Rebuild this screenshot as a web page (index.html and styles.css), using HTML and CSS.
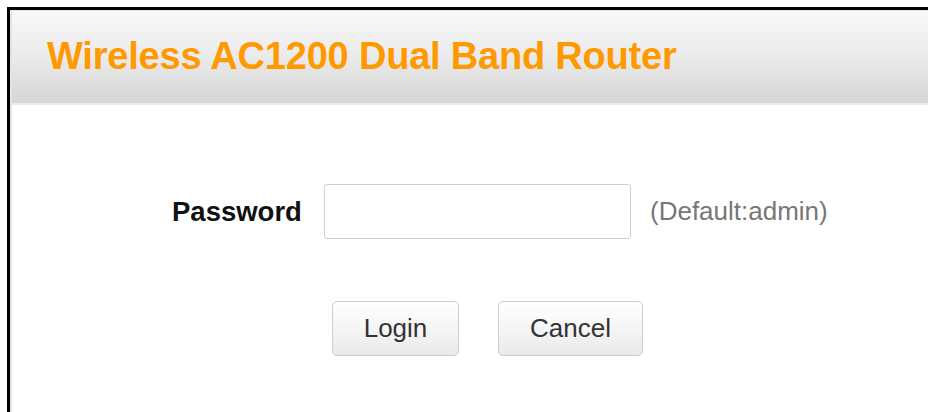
FILE: index.html
```html
<!DOCTYPE html>
<html lang="en">
<head>
<meta charset="utf-8">
<title>Wireless AC1200 Dual Band Router</title>
<link rel="stylesheet" href="styles.css">
</head>
<body>
<div class="frame">
  <div class="panel">
    <header class="banner">
      <h1 class="title">Wireless AC1200 Dual Band Router</h1>
    </header>
    <form class="login" onsubmit="return false">
      <div class="field-row">
        <label class="label" for="pwd">Password</label>
        <input class="input" id="pwd" type="password">
        <span class="hint">(Default:admin)</span>
      </div>
      <div class="button-row">
        <button class="btn btn-login" type="submit">Login</button>
        <button class="btn btn-cancel" type="reset">Cancel</button>
      </div>
    </form>
  </div>
</div>
</body>
</html>
```

FILE: styles.css
```css
html, body {
  margin: 0;
  padding: 0;
  background: #ffffff;
  overflow: hidden;
  height: 412px;
}

body {
  padding: 7px 0 0 7px;
  box-sizing: border-box;
}

.frame {
  width: 960px;
  height: 405px;
  border-top: 3px solid #000;
  border-left: 3px solid #000;
  background: #fff;
  box-sizing: border-box;
}

.panel {
  height: 100%;
  border-left: 2px solid #e4e4e4;
  border-top: 1px solid #e6e6e6;
  box-sizing: border-box;
}

.banner {
  height: 92px;
  background: linear-gradient(to bottom, #f8f8f8 0%, #ececec 45%, #d6d6d6 100%);
  border-bottom: 2px solid #ececec;
  display: flex;
  align-items: center;
  padding-left: 35px;
}

.title {
  margin: 0 0 2px 0;
  font-family: "Liberation Sans", Arial, sans-serif;
  font-weight: bold;
  font-size: 38px;
  color: #ff9900;
  letter-spacing: -0.2px;
}

.login {
  padding-top: 79px;
}

.field-row {
  display: flex;
  align-items: center;
  padding-left: 160px;
}

.label {
  width: 152px;
  font-family: "Liberation Sans", Arial, sans-serif;
  font-weight: bold;
  font-size: 27.5px;
  color: #111;
}

.input {
  width: 307px;
  height: 55px;
  box-sizing: border-box;
  border: 1px solid #cfcfcf;
  border-radius: 3px;
  margin: 0;
  padding: 0 8px;
  background: #fff;
}

.hint {
  font-family: "Liberation Sans", Arial, sans-serif;
  font-size: 26px;
  color: #777;
  margin-left: 19px;
}

.button-row {
  display: flex;
  gap: 39px;
  padding-left: 320px;
  margin-top: 62px;
}

.btn {
  height: 55px;
  box-sizing: border-box;
  border: 1px solid #cdcdcd;
  border-radius: 5px;
  background: linear-gradient(to bottom, #ffffff 0%, #f3f3f3 60%, #e9e9e9 100%);
  font-family: "Liberation Sans", Arial, sans-serif;
  font-size: 26px;
  color: #333;
  padding: 0;
}

.btn-login {
  width: 127px;
}

.btn-cancel {
  width: 145px;
}
```
